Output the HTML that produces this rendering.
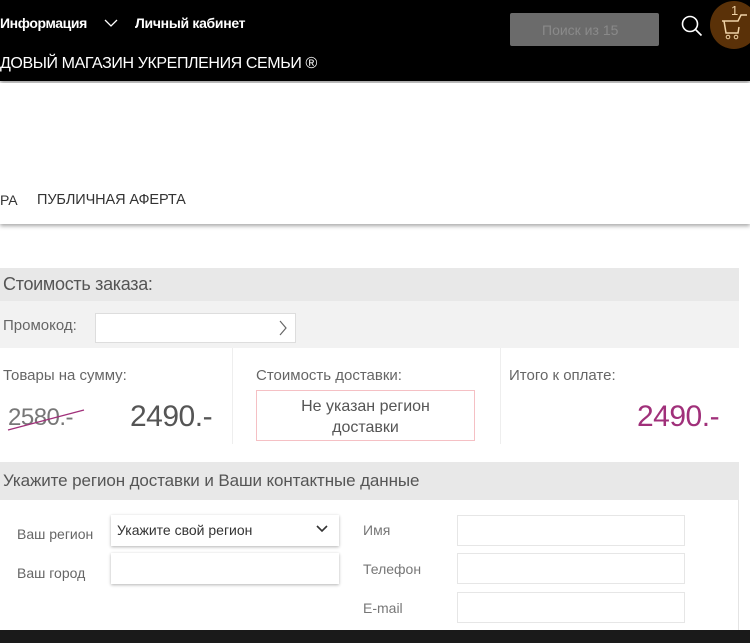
<!DOCTYPE html>
<html><head><meta charset="utf-8"><style>
*{margin:0;padding:0;box-sizing:border-box}
body{width:750px;height:643px;overflow:hidden;background:#fff;font-family:"Liberation Sans","Noto Sans CJK SC",sans-serif;position:relative;color:#555}
.a{position:absolute}
</style></head><body>
<div class="a" style="left:0;top:0;width:750px;height:81px;background:#000;box-shadow:0 2px 4px rgba(0,0,0,.4)"></div>
<div class="a" style="left:0;top:15px;color:#fff;font-size:14px;font-weight:bold;letter-spacing:-.4px">Информация</div>
<svg class="a" style="left:104px;top:18px" width="14" height="10"><path d="M1 2l6 6 6-6" stroke="#fff" fill="none" stroke-width="1.3"/></svg>
<div class="a" style="left:135px;top:15px;color:#fff;font-size:14px;font-weight:bold;letter-spacing:-.3px">Личный кабинет</div>
<div class="a" style="left:0;top:55px;color:#fff;font-size:16px;letter-spacing:-.4px">ДОВЫЙ МАГАЗИН УКРЕПЛЕНИЯ СЕМЬИ ®</div>
<div class="a" style="left:510px;top:13px;width:149px;height:33px;background:#6b6b6b;border-radius:2px;color:#8a8a8a;font-size:14px;padding:9px 0 0 32px">Поиск из 15</div>
<svg class="a" style="left:680px;top:14px" width="26" height="26"><circle cx="10" cy="10" r="7.5" stroke="#fff" stroke-width="1.6" fill="none"/><path d="M15.5 15.5l6 6" stroke="#fff" stroke-width="1.6"/></svg>
<div class="a" style="left:710px;top:1px;width:48px;height:48px;border-radius:50%;background:#5a3108"></div>
<div class="a" style="left:731px;top:3px;color:#f0d3a8;font-size:13px">1</div>
<svg class="a" style="left:720px;top:14px" width="30" height="26"><path d="M2 7h16l3-6h6M4 7l2 12h12l1-6" stroke="#f0d3a8" stroke-width="1.5" fill="none"/><circle cx="8" cy="23" r="1.8" stroke="#f0d3a8" fill="none"/><circle cx="16" cy="23" r="1.8" stroke="#f0d3a8" fill="none"/></svg>
<div class="a" style="left:0;top:83px;width:750px;height:141px;background:#fff;box-shadow:0 2px 4px rgba(0,0,0,.35)"></div>
<div class="a" style="left:0;top:192px;font-size:14px;color:#333;letter-spacing:-.1px">РА</div>
<div class="a" style="left:37px;top:192px;font-size:14.5px;color:#333;letter-spacing:-.1px">ПУБЛИЧНАЯ АФЕРТА</div>
<div class="a" style="left:0;top:268px;width:739px;height:33px;background:#e8e8e8;font-size:18px;color:#555;padding:6px 0 0 3px;letter-spacing:-.3px">Стоимость заказа:</div>
<div class="a" style="left:0;top:301px;width:739px;height:47px;background:#f2f2f2;font-size:15px;color:#666;padding:16px 0 0 3px">Промокод:</div>
<div class="a" style="left:95px;top:313px;width:201px;height:30px;background:#fff;border:1px solid #ddd"></div>
<svg class="a" style="left:278px;top:320px" width="10" height="16"><path d="M2 1l6 7-6 7" stroke="#666" fill="none" stroke-width="1.2"/></svg>
<div class="a" style="left:232px;top:348px;width:1px;height:96px;background:#eee"></div>
<div class="a" style="left:500px;top:348px;width:1px;height:96px;background:#eee"></div>
<div class="a" style="left:3px;top:367px;font-size:15px;color:#666">Товары на сумму:</div>
<div class="a" style="left:8px;top:404px;font-size:24px;color:#777;letter-spacing:-.5px">2580.-</div>
<svg class="a" style="left:6px;top:406px" width="80" height="26"><path d="M2 24L78 4" stroke="#a0307a" stroke-width="1.3"/></svg>
<div class="a" style="left:130px;top:400px;font-size:30px;color:#555;letter-spacing:-.5px">2490.-</div>
<div class="a" style="left:256px;top:367px;font-size:15px;color:#666">Стоимость доставки:</div>
<div class="a" style="left:256px;top:390px;width:219px;height:51px;border:1px solid #f5c0c4;text-align:center;font-size:16px;color:#555;padding:5px 0 0;line-height:21px">Не указан регион<br>доставки</div>
<div class="a" style="left:509px;top:367px;font-size:15px;color:#666">Итого к оплате:</div>
<div class="a" style="left:637px;top:400px;font-size:30px;color:#a0307a;letter-spacing:-.5px">2490.-</div>
<div class="a" style="left:0;top:462px;width:739px;height:38px;background:#e8e8e8;font-size:17px;color:#555;padding:9px 0 0 3px;letter-spacing:-.1px">Укажите регион доставки и Ваши контактные данные</div>
<div class="a" style="left:738px;top:500px;width:1px;height:130px;background:#e4e4e4"></div>
<div class="a" style="left:17px;top:526px;font-size:14px;color:#666">Ваш регион</div>
<div class="a" style="left:17px;top:565px;font-size:14px;color:#666">Ваш город</div>
<div class="a" style="left:111px;top:515px;width:228px;height:31px;background:#fff;box-shadow:0 1px 3px rgba(0,0,0,.3);font-size:14px;color:#333;padding:7px 0 0 6px">Укажите свой регион</div>
<svg class="a" style="left:316px;top:525px" width="12" height="8"><path d="M1 1l5 5 5-5" stroke="#333" fill="none" stroke-width="1.6"/></svg>
<div class="a" style="left:111px;top:553px;width:228px;height:31px;background:#fff;box-shadow:0 1px 3px rgba(0,0,0,.3)"></div>
<div class="a" style="left:363px;top:522px;font-size:14px;color:#777">Имя</div>
<div class="a" style="left:363px;top:561px;font-size:14px;color:#777">Телефон</div>
<div class="a" style="left:363px;top:600px;font-size:14px;color:#777">E-mail</div>
<div class="a" style="left:457px;top:515px;width:228px;height:31px;border:1px solid #e6e6e6"></div>
<div class="a" style="left:457px;top:553px;width:228px;height:31px;border:1px solid #e6e6e6"></div>
<div class="a" style="left:457px;top:592px;width:228px;height:31px;border:1px solid #e6e6e6"></div>
<div class="a" style="left:0;top:630px;width:750px;height:13px;background:#1a1a1a"></div>
</body></html>
